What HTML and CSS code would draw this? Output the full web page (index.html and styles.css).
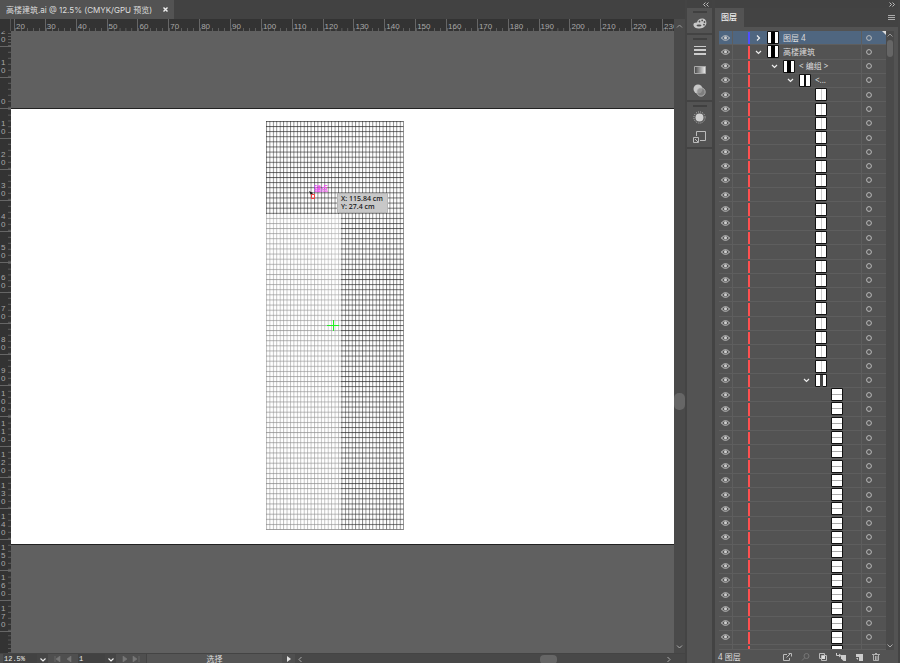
FILE: index.html
```
<!DOCTYPE html>
<html lang="zh-CN">
<head>
  <meta charset="UTF-8">
  <meta name="viewport" content="width=device-width, initial-scale=1.0">
  <title>高楼建筑.ai</title>
  <link rel="stylesheet" href="styles.css">
</head>
<body>
  <div class="app">
    <main class="document">
      <div class="tab-bar">
        <div class="doc-tab">
          <span>高楼建筑.ai @ 12.5% (CMYK/GPU 预览)</span>
          <button class="tab-close" aria-label="关闭">
            <svg width="5" height="5" viewBox="0 0 5 5"><path d="M.5.5l4 4M4.5.5l-4 4" stroke="#f0f0f0" stroke-width="1.4"/></svg>
          </button>
        </div>
      </div>
      <div class="workspace">
        <div class="ruler-corner"></div>
        <div class="ruler-x" id="ruler-x"></div>
        <div class="ruler-y" id="ruler-y"></div>
        <div class="canvas">
          <div class="artboard"></div>
          <svg class="building" width="138" height="409" viewBox="0 0 138 409">
            <defs>
              <pattern id="cols" width="3.43" height="409" patternUnits="userSpaceOnUse"><path d="M.5 0v409" stroke="#333" stroke-width=".6"/></pattern>
              <pattern id="rows" width="138" height="5.1" patternUnits="userSpaceOnUse"><path d="M0 .5h138" stroke="#222" stroke-width=".7"/></pattern>
              <linearGradient id="fade" x1="1" x2="0" y1="0" y2="1">
                <stop offset="0" stop-color="#fff" stop-opacity=".65"/>
                <stop offset=".3" stop-color="#fff" stop-opacity=".52"/>
                <stop offset="1" stop-color="#fff" stop-opacity=".42"/>
              </linearGradient>
            </defs>
            <rect width="138" height="409" fill="url(#cols)"/>
            <rect width="138" height="409" fill="url(#rows)"/>
            <rect y="93" width="75" height="316" fill="url(#fade)"/>
            <path d="M137.5 0v409M0 408.5h138" stroke="#999" stroke-width=".6"/>
          </svg>
          <svg class="center-mark" width="12" height="11" viewBox="0 0 12 11"><path d="M0 5.5h12M6.500 0v11" stroke="#20f020"/></svg>
          <svg class="pointer" width="8" height="9" viewBox="0 0 8 9">
            <path d="M0 0l4 2-2 2z" fill="#111"/>
            <path d="M2.500 3.500h3v4h-3z" fill="none" stroke="#f04040"/>
          </svg>
          <span class="anchor-hint">锚点</span>
          <div class="measure">X: 115.84 cm<br>Y: 27.4 cm</div>
        </div>
        <div class="scroll-y">
          <svg width="7" height="4" viewBox="0 0 7 4"><path d="M1 3.500l2.500-2.500L6 3.500" fill="none" stroke="#999"/></svg>
          <i class="thumb-y"></i>
          <svg width="7" height="4" viewBox="0 0 7 4"><path d="M1 .5l2.500 2.500L6 .5" fill="none" stroke="#aaa"/></svg>
        </div>
      </div>
      <footer class="status-bar">
        <label class="field zoom-field"><input type="text" value="12.5%" aria-label="缩放"></label>
        <button class="drop" aria-label="缩放列表"><svg width="6" height="4" viewBox="0 0 6 4"><path d="M.5.5L3 3 5.500.5" fill="none" stroke="#eee" stroke-width="1.200"/></svg></button>
        <div class="pager">
          <svg width="18" height="6" viewBox="0 0 18 6"><path d="M1 0v6M6 0v6L2 3zM17 0v6l-4-3z" fill="#777" stroke="#777" stroke-width=".6"/></svg>
        </div>
        <label class="field page-field"><input type="text" value="1" aria-label="画板"></label>
        <button class="drop" aria-label="画板列表"><svg width="6" height="4" viewBox="0 0 6 4"><path d="M.5.5L3 3 5.500.5" fill="none" stroke="#eee" stroke-width="1.200"/></svg></button>
        <div class="pager">
          <svg width="18" height="6" viewBox="0 0 18 6"><path d="M1 0v6l4-3zM11 0v6l4-3zM17 0v6" fill="#777" stroke="#777" stroke-width=".6"/></svg>
        </div>
        <div class="tool-name">选择</div>
        <button class="status-next" aria-label="状态菜单"><svg width="4" height="6" viewBox="0 0 4 6"><path d="M0 0v6l4-3z" fill="#e0e0e0"/></svg></button>
        <div class="scroll-x">
          <svg width="4" height="7" viewBox="0 0 4 7"><path d="M3.500 1L1 3.500 3.500 6" fill="none" stroke="#aaa"/></svg>
          <i class="thumb-x"></i>
          <svg width="4" height="7" viewBox="0 0 4 7"><path d="M.5 1L3 3.500.5 6" fill="none" stroke="#aaa"/></svg>
        </div>
      </footer>
    </main>

    <aside class="dock">
      <div class="dock-head">
        <svg width="6" height="5" viewBox="0 0 6 5"><path d="M2.500.5l-2 2 2 2M5.500.5l-2 2 2 2" fill="none" stroke="#ccc" stroke-width=".9"/></svg>
      </div>
      <div class="dock-group">
        <button aria-label="颜色">
          <svg width="14" height="11" viewBox="0 0 14 11"><path d="M.5 7.500C0 5 2 4.200 4 4.500 4.500 1.500 7.500 0 10 .5c3 .5 4.200 4 2.800 6.500C11.500 9.500 8.500 10.700 5.500 10.500 3 10.300 1 9.500.5 7.500z" fill="#c8c8c8"/><g fill="#505050"><circle cx="6.500" cy="3.500" r=".9"/><circle cx="9.200" cy="2.400" r=".9"/><circle cx="11.500" cy="4" r=".9"/><circle cx="11" cy="6.700" r=".9"/><ellipse cx="6" cy="7.500" rx="2.500" ry="1.100"/></g></svg>
        </button>
      </div>
      <div class="dock-group">
        <button aria-label="描边">
          <svg width="12" height="9" viewBox="0 0 12 9"><path d="M0 0h12v1H0zM0 3h12v2H0zM0 7h12v2H0z" fill="#ccc"/></svg>
        </button>
        <button aria-label="渐变">
          <svg width="12" height="8" viewBox="0 0 12 8"><defs><linearGradient id="grad"><stop stop-color="#444"/><stop offset="1" stop-color="#eee"/></linearGradient></defs><path d="M.5.5h11v7H.5z" fill="url(#grad)" stroke="#aaa"/></svg>
        </button>
        <button aria-label="透明度">
          <svg width="13" height="13" viewBox="0 0 13 13"><circle cx="5" cy="5" r="4.500" fill="#c8c8c8"/><circle cx="8" cy="8" r="4.200" fill="#8a8a8a" fill-opacity=".8" stroke="#bbb" stroke-width=".8"/></svg>
        </button>
      </div>
      <div class="dock-group">
        <button aria-label="外观">
          <svg width="13" height="13" viewBox="0 0 13 13"><circle cx="6.500" cy="6.500" r="4" fill="#d0d0d0"/><circle cx="6.500" cy="6.500" r="5.600" fill="none" stroke="#bbb" stroke-dasharray="1 1.200"/></svg>
        </button>
        <button aria-label="资源导出">
          <svg width="13" height="12" viewBox="0 0 13 12"><path d="M3.500 5V.5h9v9H7M.5 6.500h5v5h-5zM2 8l3 3" fill="none" stroke="#bbb"/></svg>
        </button>
      </div>
    </aside>

    <aside class="layers">
      <div class="layers-head">
        <svg width="6" height="5" viewBox="0 0 6 5"><path d="M.5.5l2 2-2 2M3.500.5l2 2-2 2" fill="none" stroke="#ccc" stroke-width=".9"/></svg>
      </div>
      <div class="layers-tabs">
        <h2>图层</h2>
        <button class="panel-menu" aria-label="面板菜单"><svg width="7" height="6" viewBox="0 0 7 6"><path d="M0 .5h7M0 2.500h7M0 4.500h7" stroke="#aaa"/></svg></button>
      </div>
      <div class="layers-body">
        <div class="layer-list" id="layer-list"></div>
        <div class="layer-scroll">
          <svg width="6" height="4" viewBox="0 0 6 4"><path d="M.5 3.500L3 1l2.500 2.500" fill="none" stroke="#999"/></svg>
          <i class="layer-thumb"></i>
          <svg width="6" height="4" viewBox="0 0 6 4"><path d="M.5.5L3 3 5.500.5" fill="none" stroke="#aaa"/></svg>
        </div>
      </div>
      <footer class="layers-foot">
        <span>4 图层</span>
        <button aria-label="收集以导出"><svg width="9" height="8" viewBox="0 0 9 8"><path d="M4 1.500H.5v6h6V5M3.500 4.500l4-4M5.500.5h3v3" fill="none" stroke="#bbb"/></svg></button>
        <button aria-label="定位对象"><svg width="9" height="8" viewBox="0 0 9 8"><circle cx="5.500" cy="3" r="2.500" fill="none" stroke="#777"/><path d="M3.500 5L1 7.500" stroke="#777"/></svg></button>
        <button aria-label="剪切蒙版"><svg width="8" height="8" viewBox="0 0 8 8"><path d="M.5.5h5v5h-5zM2.500 2.500h5v5h-5z" fill="none" stroke="#bbb"/><path d="M3 3h3v3H3z" fill="#ddd"/></svg></button>
        <button aria-label="新建子图层"><svg width="10" height="8" viewBox="0 0 10 8"><path d="M.5 0v2.500H4M3 1l2 1.500L3 4" fill="none" stroke="#ccc"/><path d="M5 2h5v6H7.500L5 5.500z" fill="#ccc"/></svg></button>
        <button aria-label="新建图层"><svg width="8" height="8" viewBox="0 0 8 8"><path d="M1 1h7v7H4V4H1z" fill="#ccc"/><path d="M1 5h2v2z" fill="#ccc"/></svg></button>
        <button aria-label="删除"><svg width="8" height="8" viewBox="0 0 8 8"><path d="M0 1.500h8M3 .5h2M1.500 2v5.500h5V2M3.500 3v4M5 3v4" fill="none" stroke="#bbb" stroke-width=".9"/></svg></button>
      </footer>
    </aside>
  </div>
  <script src="script.js"></script>
</body>
</html>
```

FILE: styles.css
```
* {
  box-sizing: border-box;
}
body {
  margin: 0;
  background: #424242;
  color: #ddd;
  font-family: "Noto Sans", "Noto Sans CJK SC", sans-serif;
  font-size: 8px;
  line-height: 8px;
}
button {
  display: flex;
  align-items: center;
  justify-content: center;
  padding: 0;
  border: 0;
  background: none;
  color: inherit;
}
svg {
  display: block;
  flex: none;
}
.app {
  display: flex;
  height: 100vh;
  overflow: hidden;
}

/* document window */
.document {
  display: flex;
  flex: 1;
  flex-direction: column;
  min-width: 0;
}
.tab-bar {
  display: flex;
  flex: 0 0 19px;
  background: #424242;
}
.doc-tab {
  display: flex;
  align-items: center;
  gap: 11px;
  padding: 0 6px;
  background: #535353;
  font-family: Inter, "Noto Sans CJK SC", sans-serif;
  white-space: nowrap;
}
.tab-close {
  width: 5px;
}
.workspace {
  display: grid;
  flex: 1;
  grid-template-columns: 11px 1fr 11px;
  grid-template-rows: 12px 1fr;
  min-height: 0;
}
.ruler-corner {
  background: #333;
  border-right: 1px solid #555;
}
.ruler-x,
.ruler-y {
  display: flex;
  overflow: hidden;
  background: #333;
  color: #a8a8a8;
  font-family: "Liberation Sans", Arial, sans-serif;
}
.ruler-x {
  grid-column: 2;
  grid-row: 1;
  padding-left: 3px;
}
.ruler-x .unit {
  flex: 1 1 0;
  min-width: 0;
  padding: 4px 0 0 1px;
  border-left: 1px solid #666;
  background: linear-gradient(to right, #5c5c5c 1px, transparent 1px) bottom left / 20% 3px repeat-x;
}
.ruler-x .unit:last-child {
  flex: 0 0 12px;
  overflow: hidden;
}
.ruler-y {
  grid-column: 1;
  grid-row: 2;
  flex-direction: column;
}
.ruler-y .unit {
  display: flex;
  flex: 1 1 0;
  flex-direction: column;
  justify-content: flex-end;
  min-height: 0;
  padding: 0 0 2px 1px;
  border-bottom: 1px solid #666;
  background: linear-gradient(to top, #5c5c5c 1px, transparent 1px) bottom right / 3px 20% repeat-y;
}
.ruler-y .unit:first-child {
  flex: 0 0 16px;
}
.ruler-y .unit:last-child {
  flex: 0 0 21px;
  border: 0;
}
.canvas {
  position: relative;
  display: flex;
  grid-column: 2;
  grid-row: 2;
  flex-direction: column;
  padding: 77px 0 108px;
  background: #606060;
}
.artboard {
  flex: 1;
  background: #fff;
  border-top: 1px solid #222;
  border-bottom: 1px solid #222;
}
.building {
  position: absolute;
  left: 255px;
  top: 90px;
}
.center-mark {
  position: absolute;
  left: 316px;
  top: 289px;
}
.pointer {
  position: absolute;
  left: 298px;
  top: 160px;
}
.anchor-hint {
  position: absolute;
  left: 303px;
  top: 154px;
  color: #f050f0;
  font-size: 7px;
  font-weight: bold;
}
.measure {
  position: absolute;
  left: 326px;
  top: 162px;
  padding: 1px 4px 1px 3px;
  background: #c8c8c8;
  border: 1px solid #b4b4b4;
  color: #111;
  font-size: 7px;
  font-weight: 500;
}
.scroll-y {
  display: flex;
  grid-column: 3;
  grid-row: 1 / 3;
  flex-direction: column;
  align-items: center;
  justify-content: space-between;
  padding: 5px 0 4px;
  background: #4a4a4a;
}
.thumb-y {
  width: 11px;
  height: 17px;
  margin-top: 130px;
  border-radius: 5px;
  background: #666;
}
.status-bar {
  display: flex;
  flex: 0 0 10px;
  overflow: hidden;
  background: #4f4f4f;
  border-top: 1px solid #444;
}
.field {
  display: flex;
  background: #424242;
}
.field input {
  width: 100%;
  padding: 1px 1px 0;
  border: 0;
  background: none;
  color: #eee;
  font: 7px/8px "Liberation Mono", monospace;
}
.zoom-field {
  width: 34px;
  margin-left: 3px;
}
.page-field {
  width: 27px;
}
.drop {
  width: 11px;
  padding-top: 2px;
  background: #454545;
}
.pager {
  display: flex;
  align-items: center;
  justify-content: center;
  width: 30px;
  padding-top: 1px;
}
.tool-name {
  flex: 1;
  padding-top: 1px;
  border-left: 1px solid #444;
  background: #555;
  text-align: center;
}
.status-next {
  width: 13px;
  padding-top: 1px;
}
.scroll-x {
  display: flex;
  flex: 0 0 390px;
  align-items: center;
  justify-content: space-between;
  padding: 1px 14px 0 3px;
  background: #484848;
}
.thumb-x {
  width: 17px;
  height: 9px;
  margin-left: 128px;
  border-radius: 4px;
  background: #666;
}

/* icon strip */
.dock {
  display: flex;
  flex: 0 0 30px;
  flex-direction: column;
  border-left: 2px solid #444;
  border-right: 3px solid #434343;
  background: #535353;
}
.dock-head,
.layers-head {
  display: flex;
  flex: 0 0 8px;
  align-items: center;
  background: #424242;
}
.dock-head {
  justify-content: center;
  padding-left: 12px;
}
.dock-group {
  display: flex;
  flex-direction: column;
  align-items: center;
  padding-top: 3px;
  border-bottom: 2px solid #434343;
}
.dock-group::before {
  width: 14px;
  height: 2px;
  content: "";
  background: #404040;
}
.dock-group button {
  width: 24px;
  height: 20px;
}

/* layers panel */
.layers {
  display: flex;
  flex: 0 0 185px;
  flex-direction: column;
  border-right: 2px solid #444;
  background: #535353;
}
.layers-head {
  justify-content: flex-end;
  padding-right: 3px;
}
.layers-tabs {
  display: flex;
  flex: 0 0 19px;
  align-items: stretch;
  justify-content: space-between;
  background: #434343;
}
.layers-tabs h2 {
  margin: 0;
  padding: 5px 7px 0 6px;
  background: #535353;
  color: #eee;
  font-size: 8px;
  font-weight: 500;
}
.panel-menu {
  width: 7px;
  margin-right: 3px;
}
.layers-body {
  display: flex;
  flex: 1;
  min-height: 0;
  padding: 4px 4px 0;
}
.layer-list {
  display: flex;
  flex: 1;
  flex-direction: column;
  overflow: hidden;
  border-bottom: 1px solid #5e5e5e;
}
.layer {
  position: relative;
  display: flex;
  flex: 1 1 0;
  align-items: center;
  min-height: 0;
  border-bottom: 1px solid #5e5e5e;
}
.layer:last-child {
  flex: 0 0 4px;
  align-items: flex-start;
  overflow: hidden;
  border: 0;
}
.layer.selected {
  background: #4f6680;
}
.layer.selected::after {
  position: absolute;
  top: 0;
  right: 0;
  border-top: 4px solid #ddd;
  border-left: 4px solid transparent;
  content: "";
}
.eye {
  width: 14px;
  align-self: stretch;
  border-right: 1px solid #5e5e5e;
}
.mark {
  align-self: stretch;
  width: 2px;
  margin: 1px 0 0 15px;
  background: #ff4f4f;
}
.selected .mark {
  background: #4f4fff;
}
.layer-name {
  display: flex;
  flex: 1;
  align-items: center;
  gap: 4px;
  min-width: 0;
  overflow: hidden;
  white-space: nowrap;
}
.arrow {
  width: 7px;
  margin-right: 1px;
}
.thumb {
  display: block;
  flex: none;
}
.depth-0 { padding-left: 5px; }
.depth-1 { padding-left: 21px; }
.depth-2 { padding-left: 37px; }
.depth-3 { padding-left: 53px; }
.depth-4 { padding-left: 69px; }
.target {
  align-self: stretch;
  width: 25px;
  padding-right: 10px;
  border-left: 1px solid #5e5e5e;
}
.layer:last-child .eye svg,
.layer:last-child .target svg {
  visibility: hidden;
}
.layer-scroll {
  display: flex;
  flex: 0 0 8px;
  flex-direction: column;
  align-items: center;
  padding: 2px 0;
  background: #4a4a4a;
}
.layer-thumb {
  width: 6px;
  height: 17px;
  margin: 3px 0 auto;
  border-radius: 3px;
  background: #666;
}
.layers-foot {
  display: flex;
  flex: 0 0 13px;
  align-items: center;
  justify-content: flex-end;
  gap: 9px;
  padding-right: 18px;
}
.layers-foot span {
  margin-right: auto;
  padding-left: 3px;
}
```

FILE: script.js
```
// rulers
function addUnit(ruler, html) {
  const unit = document.createElement('div');
  unit.className = 'unit';
  unit.innerHTML = html;
  ruler.appendChild(unit);
}

const rulerX = document.getElementById('ruler-x');
for (let n = 20; n <= 230; n += 10) {
  addUnit(rulerX, n);
}

const rulerY = document.getElementById('ruler-y');
for (let n = -20; n <= 170; n += 10) {
  addUnit(rulerY, String(Math.abs(n)).split('').map(d => `<span>${d}</span>`).join(''));
}
addUnit(rulerY, '');

// layers
const eyeIcon = '<svg width="9" height="6" viewBox="0 0 9 6"><path d="M.5 3C2.500 0 6.500 0 8.500 3 6.500 6 2.500 6 .5 3z" fill="none" stroke="#c8c8c8"/><circle cx="4.500" cy="2.800" r="1.500" fill="#d0d0d0"/></svg>';
const ringIcon = '<svg width="6" height="6" viewBox="0 0 6 6"><circle cx="3" cy="3" r="2.400" fill="none" stroke="#bbb"/></svg>';
const arrows = {
  closed: '<path d="M2 .5L4.500 3 2 5.500"/>',
  open: '<path d="M1 2l2.500 2.500L6 2"/>'
};
const thumbs = {
  dark: '<path d="M4 1h4v12H4z" fill="#000"/>',
  split: '<path d="M5 1h2v12H5z" fill="#111"/>',
  column: '<path d="M6.500 1v11" stroke="#ccc"/>',
  grid: '<path d="M5 1h3v12H5z" fill="#444"/>',
  row: '<path d="M1 6.500h10" stroke="#aaa"/>'
};

const layers = [
  { name: '图层 4', depth: 0, arrow: 'closed', thumb: 'dark' },
  { name: '高楼建筑', depth: 0, arrow: 'open', thumb: 'dark' },
  { name: '&lt; 编组 &gt;', depth: 1, arrow: 'open', thumb: 'dark' },
  { name: '&lt;...', depth: 2, arrow: 'open', thumb: 'split' }
];
for (let i = 0; i < 20; i++) {
  layers.push({ name: '', depth: 3, thumb: 'column' });
}
layers.push({ name: '', depth: 3, arrow: 'open', thumb: 'grid' });
for (let i = 0; i < 19; i++) {
  layers.push({ name: '', depth: 4, thumb: 'row' });
}

const list = document.getElementById('layer-list');
layers.forEach((layer, i) => {
  const row = document.createElement('div');
  row.className = 'layer' + (i === 0 ? ' selected' : '');
  const arrow = layer.arrow
    ? `<button class="arrow" aria-label="展开"><svg width="7" height="6" viewBox="0 0 7 6" fill="none" stroke="#eee" stroke-width="1.200">${arrows[layer.arrow]}</svg></button>`
    : '<span class="arrow"></span>';
  row.innerHTML = `
    <button class="eye" aria-label="切换可视性">${eyeIcon}</button>
    <span class="mark"></span>
    <div class="layer-name depth-${layer.depth}">
      ${arrow}
      <svg class="thumb" width="12" height="13" viewBox="0 0 12 13"><path d="M.5.5h11v12H.5z" fill="#fff" stroke="#111"/>${thumbs[layer.thumb]}</svg>
      <span>${layer.name}</span>
    </div>
    <button class="target" aria-label="定位">${ringIcon}</button>`;
  list.appendChild(row);
});
```
